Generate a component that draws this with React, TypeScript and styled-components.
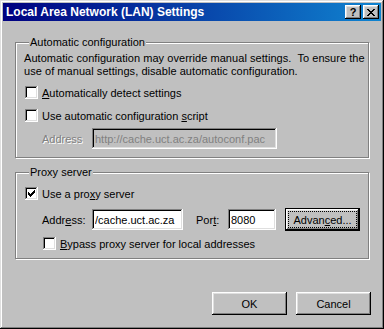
import React from 'react';
import styled, { createGlobalStyle } from 'styled-components';

const GlobalStyle = createGlobalStyle`
  html, body {
    margin: 0;
    padding: 0;
    background: #c0c0c0;
  }
  body {
    font-family: 'Liberation Sans', Arial, sans-serif;
    font-size: 11px;
    color: #000;
  }
`;

const raised = `
  box-shadow: inset -1px -1px #000, inset 1px 1px #fff, inset -2px -2px #808080, inset 2px 2px #dfdfdf;
`;
const sunken = `
  box-shadow: inset -1px -1px #fff, inset 1px 1px #808080, inset -2px -2px #dfdfdf, inset 2px 2px #000;
`;

const Window = styled.div`
  box-sizing: border-box;
  width: 384px;
  height: 329px;
  padding: 3px;
  background: #c0c0c0;
  box-shadow: inset -1px -1px #000, inset 1px 1px #dfdfdf, inset -2px -2px #808080, inset 2px 2px #fff;
  display: flex;
  flex-direction: column;
`;

const TitleBar = styled.div`
  height: 18px;
  display: flex;
  align-items: center;
  justify-content: space-between;
  padding: 0 2px 0 3px;
  background: linear-gradient(90deg, #000080, #1084d0);
`;

const Title = styled.span`
  color: #fff;
  font-weight: bold;
  font-size: 12px;
  white-space: nowrap;
`;

const CaptionButtons = styled.div`
  display: flex;
  gap: 2px;
`;

const CaptionButton = styled.div`
  width: 16px;
  height: 14px;
  background: #c0c0c0;
  ${raised}
  display: flex;
  align-items: center;
  justify-content: center;
  font-weight: bold;
  font-size: 11px;
  line-height: 14px;
`;

const Content = styled.div`
  padding: 0 12px;
  display: flex;
  flex-direction: column;
`;

const Group = styled.fieldset<{ $top: number }>`
  margin: ${(p) => p.$top}px 0 0;
  padding: 0 8px 0 8px;
  min-width: 0;
  border: 1px solid #808080;
  box-shadow: inset 1px 1px #fff, 1px 1px #fff;
`;

const Legend = styled.legend`
  margin-left: 5px;
  padding: 0 1px;
  line-height: 13px;
  background: #c0c0c0;
`;

const GroupBody = styled.div<{ $pt: number; $pb: number }>`
  display: flex;
  flex-direction: column;
  padding: ${(p) => p.$pt}px 0 ${(p) => p.$pb}px;
`;

const Description = styled.p`
  margin: 0;
  line-height: 13px;
  white-space: pre;
  letter-spacing: 0.05px;
`;

const CheckRow = styled.label<{ $mt: number; $indent?: number }>`
  display: flex;
  align-items: center;
  gap: 4px;
  height: 13px;
  margin-top: ${(p) => p.$mt}px;
  padding-left: ${(p) => 1 + (p.$indent || 0)}px;
  white-space: nowrap;
`;

const Box = styled.span`
  box-sizing: border-box;
  width: 13px;
  height: 13px;
  flex: none;
  background: #fff;
  ${sunken}
  display: flex;
  align-items: center;
  justify-content: center;
`;

const Key = styled.span`
  text-decoration: underline;
`;

const FieldRow = styled.div<{ $mt: number }>`
  display: flex;
  align-items: center;
  height: 23px;
  margin-top: ${(p) => p.$mt}px;
  padding-left: 18px;
`;

const FieldLabel = styled.span<{ $width: number; $ml?: number; $disabled?: boolean }>`
  width: ${(p) => p.$width}px;
  margin-left: ${(p) => p.$ml || 0}px;
  flex: none;
  white-space: nowrap;
  color: ${(p) => (p.$disabled ? '#808080' : '#000')};
  text-shadow: ${(p) => (p.$disabled ? '1px 1px #fff' : 'none')};
`;

const TextField = styled.input<{ $width: number; $disabled?: boolean }>`
  box-sizing: border-box;
  width: ${(p) => p.$width}px;
  height: 21px;
  flex: none;
  border: none;
  outline: none;
  margin: 0;
  padding: 0 3px;
  font: inherit;
  color: ${(p) => (p.$disabled ? '#808080' : '#000')};
  background: ${(p) => (p.$disabled ? '#c0c0c0' : '#fff')};
  ${sunken}
`;

const PushButton = styled.button<{ $default?: boolean; $ml?: number }>`
  box-sizing: border-box;
  width: 75px;
  height: 23px;
  margin: 0 0 0 ${(p) => p.$ml || 0}px;
  padding: 0;
  font: inherit;
  color: #000;
  background: #c0c0c0;
  display: flex;
  align-items: stretch;
  border: ${(p) => (p.$default ? '1px solid #000' : 'none')};
  ${raised}
`;

const ButtonFace = styled.span<{ $focus?: boolean }>`
  flex: 1;
  margin: ${(p) => (p.$focus ? '2px' : '0')};
  border: 1px dotted ${(p) => (p.$focus ? '#000' : 'transparent')};
  display: flex;
  align-items: center;
  justify-content: center;
`;

const Footer = styled.div`
  display: flex;
  justify-content: flex-end;
  gap: 9px;
  margin-top: 33px;
  padding-right: 10px;
`;

const CheckMark = () => (
  <svg width="7" height="7" viewBox="0 0 7 7" shapeRendering="crispEdges">
    {[2, 3, 4, 3, 2, 1, 0].map((y, x) => (
      <rect key={x} x={x} y={y} width="1" height="3" fill="#000" />
    ))}
  </svg>
);

const CloseGlyph = () => (
  <svg width="8" height="7" viewBox="0 0 8 7" shapeRendering="crispEdges">
    <path
      d="M0 0h2v1h-2zM6 0h2v1h-2zM1 1h2v1h-2zM5 1h2v1h-2zM2 2h4v1h-4zM3 3h2v1h-2zM2 4h4v1h-4zM1 5h2v1h-2zM5 5h2v1h-2zM0 6h2v1h-2zM6 6h2v1h-2z"
      fill="#000"
    />
  </svg>
);

const App = () => {
  return (
    <Window>
      <GlobalStyle />
      <TitleBar>
        <Title>Local Area Network (LAN) Settings</Title>
        <CaptionButtons>
          <CaptionButton>?</CaptionButton>
          <CaptionButton>
            <CloseGlyph />
          </CaptionButton>
        </CaptionButtons>
      </TitleBar>
      <Content>
        <Group $top={15}>
          <Legend>Automatic configuration</Legend>
          <GroupBody $pt={3} $pb={7}>
            <Description>
              {'Automatic configuration may override manual settings.  To ensure the\nuse of manual settings, disable automatic configuration.'}
            </Description>
            <CheckRow $mt={8}>
              <Box />
              <span>
                <Key>A</Key>utomatically detect settings
              </span>
            </CheckRow>
            <CheckRow $mt={10}>
              <Box />
              <span>
                Use automatic configuration <Key>s</Key>cript
              </span>
            </CheckRow>
            <FieldRow $mt={5}>
              <FieldLabel $width={50} $disabled>
                Address
              </FieldLabel>
              <TextField $width={185} $disabled readOnly value="http://cache.uct.ac.za/autoconf.pac" />
            </FieldRow>
          </GroupBody>
        </Group>
        <Group $top={8}>
          <Legend>Proxy server</Legend>
          <GroupBody $pt={8} $pb={8}>
            <CheckRow $mt={0}>
              <Box>
                <CheckMark />
              </Box>
              <span>
                Use a pro<Key>x</Key>y server
              </span>
            </CheckRow>
            <FieldRow $mt={8}>
              <FieldLabel $width={50}>
                Addr<Key>e</Key>ss:
              </FieldLabel>
              <TextField $width={91} readOnly value="/cache.uct.ac.za" />
              <FieldLabel $width={32} $ml={13}>
                Por<Key>t</Key>:
              </FieldLabel>
              <TextField $width={48} readOnly value="8080" />
              <PushButton $default $ml={9}>
                <ButtonFace $focus>
                  <span>
                    Advan<Key>c</Key>ed...
                  </span>
                </ButtonFace>
              </PushButton>
            </FieldRow>
            <CheckRow $mt={6} $indent={18}>
              <Box />
              <span>
                <Key>B</Key>ypass proxy server for local addresses
              </span>
            </CheckRow>
          </GroupBody>
        </Group>
      </Content>
      <Footer>
        <PushButton>
          <ButtonFace>OK</ButtonFace>
        </PushButton>
        <PushButton>
          <ButtonFace>Cancel</ButtonFace>
        </PushButton>
      </Footer>
    </Window>
  );
};

export default App;
